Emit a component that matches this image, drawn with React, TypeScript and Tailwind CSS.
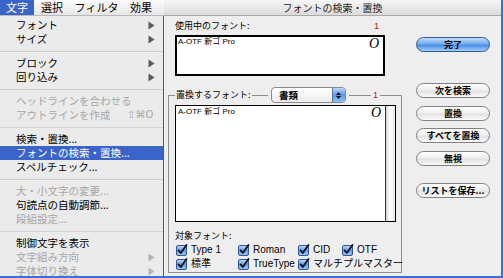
import React from "react";

const JP = { fontFamily: '"Noto Sans CJK JP", "DejaVu Sans", sans-serif' };
const LAT = { fontFamily: '"Liberation Sans", "Noto Sans CJK JP", sans-serif' };

type Item = { t?: string; dis?: boolean; arrow?: boolean; sel?: boolean; sc?: string; sep?: boolean };

const items: Item[] = [
  { t: "フォント", arrow: true },
  { t: "サイズ", arrow: true },
  { sep: true },
  { t: "ブロック", arrow: true },
  { t: "回り込み", arrow: true },
  { sep: true },
  { t: "ヘッドラインを合わせる", dis: true },
  { t: "アウトラインを作成", dis: true, sc: "⇧⌘O" },
  { sep: true },
  { t: "検索・置換..." },
  { t: "フォントの検索・置換...", sel: true },
  { t: "スペルチェック..." },
  { sep: true },
  { t: "大・小文字の変更...", dis: true },
  { t: "句読点の自動調節..." },
  { t: "段組設定...", dis: true },
  { sep: true },
  { t: "制御文字を表示" },
  { t: "文字組み方向", dis: true, arrow: true },
  { t: "字体切り換え", dis: true, arrow: true },
];

function Arrow({ dis }: { dis?: boolean }) {
  return (
    <svg width="7" height="9" viewBox="0 0 7 9" className="absolute left-[148px] top-[3px]">
      <path d="M0.5 0.5 L6.5 4.5 L0.5 8.5 Z" fill={dis ? "#b4b4b4" : "#5a5a5a"} />
    </svg>
  );
}

function Check() {
  return (
    <svg width="12" height="12" viewBox="0 0 12 12" className="shrink-0">
      <defs>
        <linearGradient id="cbg" x1="0" y1="0" x2="0" y2="1">
          <stop offset="0" stopColor="#c4def9" />
          <stop offset="0.5" stopColor="#5f9be6" />
          <stop offset="1" stopColor="#9ccaf7" />
        </linearGradient>
      </defs>
      <rect x="0.5" y="1.5" width="10" height="10" rx="1.5" fill="url(#cbg)" stroke="#2f5797" />
      <path d="M2.6 6.4 L4.8 9 L10.5 1" fill="none" stroke="#0d0d0d" strokeWidth="1.7" strokeLinecap="round" strokeLinejoin="round" />
    </svg>
  );
}

function CB({ label, w }: { label: string; w: string }) {
  return (
    <div className={`flex items-center gap-[3px] shrink-0 whitespace-nowrap ${w}`}>
      <Check />
      <span className="text-[10px] leading-[12px] text-black whitespace-nowrap" style={LAT}>{label}</span>
    </div>
  );
}

function Btn({ label, blue, mt }: { label: string; blue?: boolean; mt: string }) {
  return (
    <div
      className={`${mt} h-[15px] w-[74px] rounded-full border flex items-center justify-center text-[9px] font-bold leading-[13px] text-black ${
        blue
          ? "border-[#35598f] bg-[linear-gradient(#c3dcf8,#74aaee_45%,#4a8be6_55%,#9fd0fb)]"
          : "border-[#808080] bg-[linear-gradient(#ffffff,#efefef_45%,#e2e2e2_55%,#fbfbfb)]"
      }`}
      style={JP}
    >
      {label}
    </div>
  );
}

function OIcon() {
  return (
    <span
      className="text-[14px] leading-[14px] italic text-black"
      style={{ fontFamily: '"Liberation Serif", serif' }}
    >
      O
    </span>
  );
}

export default function App() {
  return (
    <div className="w-[503px] h-[278px] overflow-hidden border-r-2 border-b-2 border-[#3f6fd0] flex bg-[#eeeeee]">
      {/* Menu */}
      <div className="w-[164px] shrink-0 flex flex-col" style={JP}>
        <div className="h-[16px] flex bg-[linear-gradient(#fbfbfb,#e6e6e6)] border-b border-[#b8b8b8] text-[11px] leading-[15px]">
          <div className="w-[34px] bg-[#3a64c8] text-white flex items-center justify-center">文字</div>
          <div className="w-[36px] flex items-center justify-center text-black">選択</div>
          <div className="w-[53px] flex items-center justify-center text-black">フィルタ</div>
          <div className="w-[36px] flex items-center justify-center text-black">効果</div>
        </div>
        <div className="flex-1 bg-[#ebebeb] border-r border-[#7d4a3e] pt-[2px]">
          {items.map((it, i) =>
            it.sep ? (
              <div key={i} className="h-[10px] flex items-center">
                <div className="h-px w-full bg-[#d2d2d2]" />
              </div>
            ) : (
              <div
                key={i}
                className={`relative h-[14px] flex items-center pl-[16px] text-[10.5px] leading-[14px] ${
                  it.sel ? "bg-[#3a64c8] text-white" : it.dis ? "text-[#a6a6a6]" : "text-black"
                }`}
              >
                <span>{it.t}</span>
                {it.sc && (
                  <span className="absolute left-[127px] top-0 text-[10px] leading-[14px]" style={{ fontFamily: '"DejaVu Sans", sans-serif' }}>
                    {it.sc}
                  </span>
                )}
                {it.arrow && <Arrow dis={it.dis} />}
              </div>
            )
          )}
        </div>
      </div>

      {/* Dialog */}
      <div className="flex-1 flex flex-col">
        <div
          className="h-[16px] shrink-0 flex items-center justify-center bg-[linear-gradient(#f6f6f6,#dadada)] border-b border-[#a9a9a9] text-[10px] leading-[15px] text-[#222]"
          style={JP}
        >
          フォントの検索・置換
        </div>
        <div className="flex-1 flex pl-[4px]">
          {/* left column */}
          <div className="w-[234px] shrink-0 flex flex-col" style={JP}>
            <div className="mt-[4px] ml-[7px] w-[210px] h-[12px] flex items-center justify-between pr-[6px] text-[9px] leading-[12px] text-black">
              <span>使用中のフォント:</span>
              <span className="text-[#b02020]" style={LAT}>1</span>
            </div>
            <div className="mt-[3px] ml-[7px] w-[210px] h-[41px] border-2 border-black bg-white flex items-start justify-between px-[1px] pr-[4px]">
              <span className="text-[8px] leading-[10px] text-black" style={LAT}>A-OTF 新ゴ Pro</span>
              <OIcon />
            </div>

            {/* group */}
            <div className="mt-[11px] flex flex-col">
              <div className="h-[16px] flex items-stretch">
                <div className="w-[7px] mt-[8px] border-t border-l border-[#8e8e8e]" />
                <div className="px-[1px] flex items-center text-[9px] leading-[12px] text-black">置換するフォント:</div>
                <div className="flex-1 mt-[8px] border-t border-[#8e8e8e]" />
                <div className="mx-[3px] w-[75px] rounded-[4px] border border-[#8a8a8a] flex overflow-hidden bg-[linear-gradient(#ffffff,#ececec)]">
                  <div className="flex-1 flex items-center pl-[7px] text-[9.5px] font-bold leading-[14px] text-black">書類</div>
                  <div className="w-[13px] bg-[linear-gradient(#bcd8f8,#5c98e6_50%,#8cc0f6)] border-l border-[#5577aa] flex flex-col items-center justify-center gap-[1px]">
                    <svg width="5" height="3" viewBox="0 0 5 3"><path d="M0 3 L2.5 0 L5 3 Z" fill="#111" /></svg>
                    <svg width="5" height="3" viewBox="0 0 5 3"><path d="M0 0 L2.5 3 L5 0 Z" fill="#111" /></svg>
                  </div>
                </div>
                <div className="w-[22px] mt-[8px] border-t border-[#8e8e8e]" />
                <div className="px-[2px] flex items-center text-[9px] leading-[12px] text-[#b02020]" style={LAT}>1</div>
                <div className="w-[22px] mt-[8px] border-t border-r border-[#8e8e8e]" />
              </div>
              <div className="border-l border-r border-b border-[#8e8e8e] pl-[6px] pr-[5px] pt-[2px] pb-[1px] flex flex-col">
                <div className="h-[117px] flex border border-black bg-white">
                  <div className="flex-1 flex items-start justify-between pl-[2px] pr-[4px]">
                    <span className="text-[8px] leading-[10px] mt-[1px] text-black" style={LAT}>A-OTF 新ゴ Pro</span>
                    <OIcon />
                  </div>
                  <div className="w-[10px] border-l border-[#333] bg-[linear-gradient(90deg,#d6d6d6,#ffffff_45%,#e8e8e8)]" />
                </div>
                <div className="mt-[8px] h-[12px] flex items-center text-[9px] leading-[12px] text-black">対象フォント:</div>
                <div className="mt-[1px] h-[14px] flex items-center pl-[1px]">
                  <CB label="Type 1" w="w-[62px]" />
                  <CB label="Roman" w="w-[60px]" />
                  <CB label="CID" w="w-[44px]" />
                  <CB label="OTF" w="w-[40px]" />
                </div>
                <div className="h-[14px] flex items-center pl-[1px]">
                  <CB label="標準" w="w-[62px]" />
                  <CB label="TrueType" w="w-[60px]" />
                  <CB label="マルチプルマスター" w="w-[90px]" />
                </div>
              </div>
            </div>
          </div>

          {/* buttons */}
          <div className="ml-[14px] flex flex-col">
            <Btn label="完了" blue mt="mt-[21px]" />
            <Btn label="次を検索" mt="mt-[31px]" />
            <Btn label="置換" mt="mt-[7.5px]" />
            <Btn label="すべてを置換" mt="mt-[7.5px]" />
            <Btn label="無視" mt="mt-[7.5px]" />
            <Btn label="リストを保存..." mt="mt-[17px]" />
          </div>
        </div>
      </div>
    </div>
  );
}
